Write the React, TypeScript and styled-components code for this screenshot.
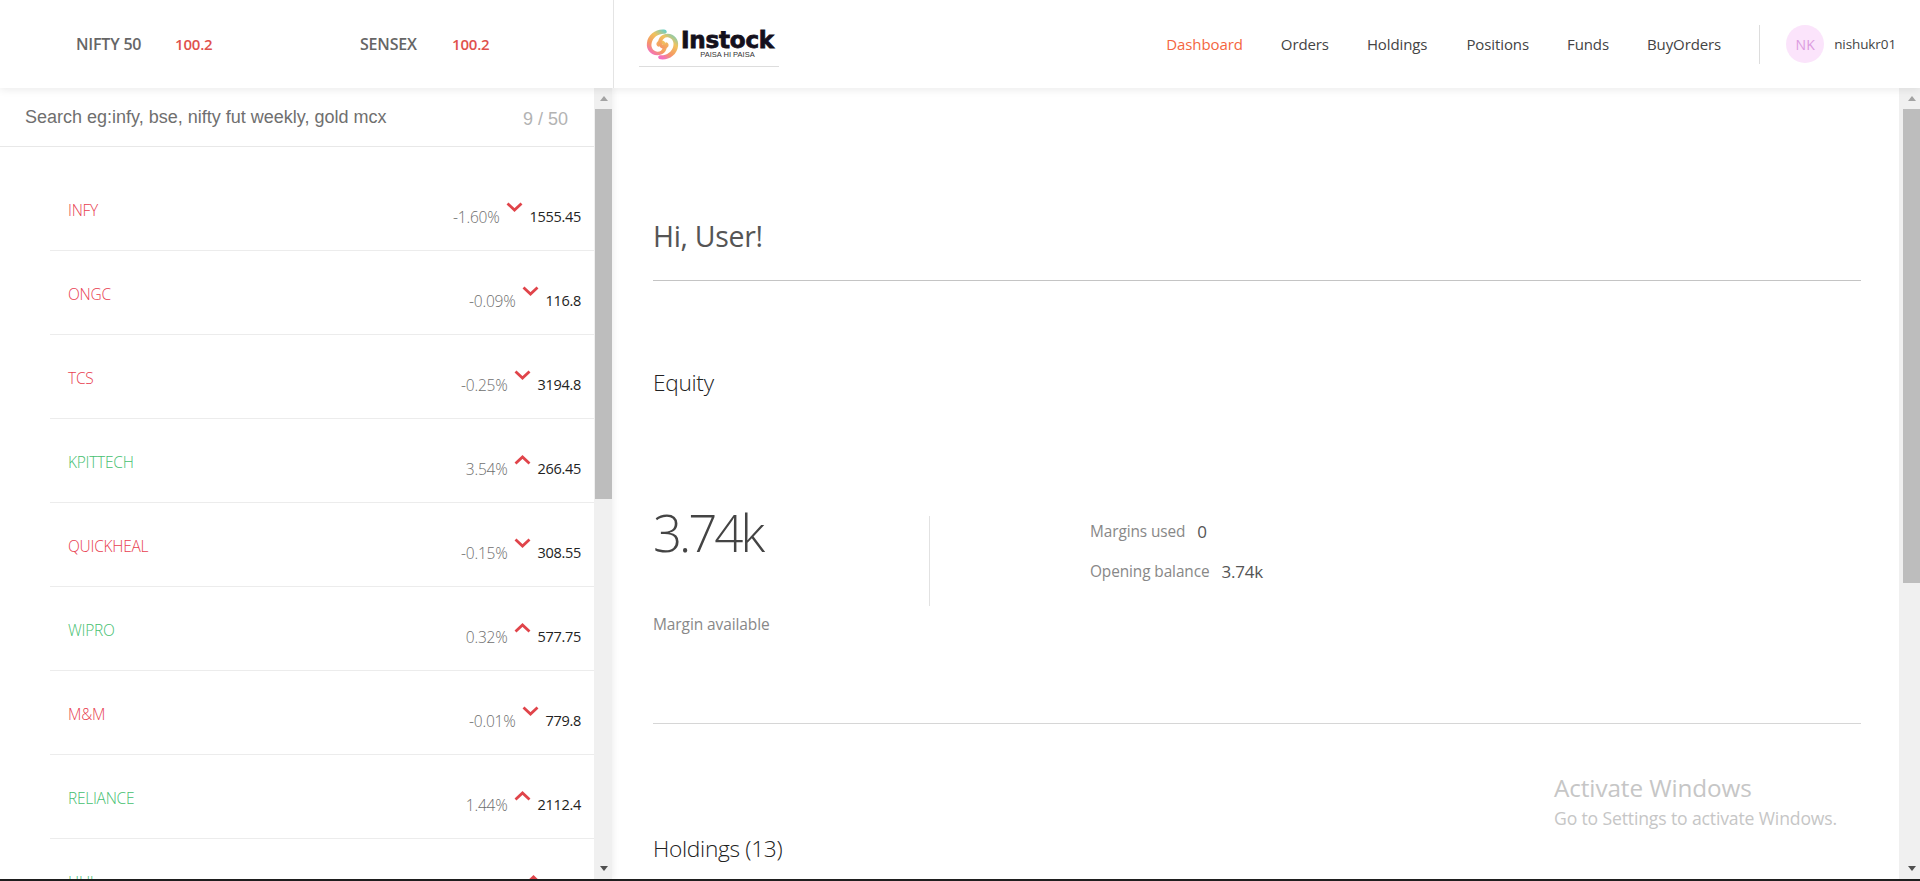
import React from "react";
import styled, { createGlobalStyle } from "styled-components";

const Global = createGlobalStyle`
  html, body { margin: 0; padding: 0; height: 100%; background: #fff; overflow: hidden; }
  * { box-sizing: border-box; }
  body { font-family: "Open Sans", "Noto Sans", sans-serif; }
`;

const Page = styled.div`
  width: 1920px; height: 881px; display: flex; flex-direction: column; overflow: hidden; position: relative;
`;
const TopBar = styled.header`
  height: 88px; flex: none; display: flex; box-shadow: 0 2px 8px rgba(0,0,0,.08); position: relative; z-index: 2; background: #fff;
`;
const Indices = styled.div`
  width: 614px; flex: none; border-right: 1px solid #e4e4e4; display: flex; align-items: center; padding-left: 76px;
`;
const IndexName = styled.span<{ $w: number }>`
  font-size: 16px; font-weight: 600; color: #666; width: ${p => p.$w}px; letter-spacing: -.2px;
`;
const IndexValue = styled.span<{ $w: number }>`
  font-size: 15px; font-weight: 600; color: #df514c; width: ${p => p.$w}px; letter-spacing: -.2px;
`;
const NavSide = styled.div`
  flex: 1; display: flex; align-items: center; padding-left: 25px; padding-right: 24px;
`;
const Logo = styled.div`
  width: 140px; height: 67px; align-self: flex-start; border-bottom: 1px solid #ddd; display: flex; align-items: flex-start; padding: 28px 0 0 7px; gap: 2px;
`;
const LogoWords = styled.div`
  display: flex; flex-direction: column; align-items: center; margin-top: 1px;
`;
const LogoName = styled.span`
  font-family: "DejaVu Sans", sans-serif; font-weight: 700; font-size: 23px; line-height: 22px; color: #14101c; letter-spacing: -.2px; -webkit-text-stroke: .8px #14101c;
`;
const LogoTag = styled.span`
  font-family: "Liberation Sans", sans-serif; font-size: 7.5px; line-height: 8px; color: #333; margin-top: 0;
`;
const Nav = styled.nav`
  margin-left: auto; display: flex; align-items: center;
`;
const NavLink = styled.a<{ $active?: boolean; $gap: number }>`
  font-size: 15px; color: ${p => (p.$active ? "#f4663f" : "#444")}; margin-right: ${p => p.$gap}px; letter-spacing: -.1px;
`;
const NavDivider = styled.div`
  width: 1px; height: 39px; background: #ddd; margin-right: 26px; margin-left: 0;
`;
const Avatar = styled.div`
  width: 38px; height: 38px; border-radius: 50%; background: #fbe4fb; color: #dc9be0; font-size: 14px; display: flex; align-items: center; justify-content: center; margin-right: 10px;
`;
const UserName = styled.span`
  font-size: 13.5px; color: #444; letter-spacing: -.1px;
`;

const Body = styled.div`
  flex: 1; min-height: 0; display: flex;
`;
const Watch = styled.aside`
  width: 612px; flex: none; display: flex; box-shadow: 2px 0 6px rgba(0,0,0,.06); position: relative; z-index: 1;
`;
const WatchMain = styled.div`
  width: 594px; flex: none; overflow: hidden; height: 100%;
`;
const SearchBar = styled.div`
  height: 59px; border-bottom: 1px solid #e8e8e8; display: flex; align-items: center; justify-content: space-between; padding: 0 25px 0 25px; margin-bottom: 20px;
  font-family: "Liberation Sans", sans-serif;
`;
const SearchHint = styled.span`
  font-size: 18px; color: #6f6f6f; margin-top: 1px;
`;
const Count = styled.span`
  font-size: 18px; color: #b3b3b3; margin-top: 4px; margin-right: 1px;
`;
const Row = styled.div`
  height: 84px; margin-left: 50px; border-bottom: 1px solid #ececec; padding: 0 13px 0 18px; display: flex; position: relative;
`;
const Name = styled.span<{ $up: boolean }>`
  font-size: 15.5px; font-weight: 300; color: ${p => (p.$up ? "#45c070" : "#e8404f")}; line-height: 20px; margin-top: 33px; letter-spacing: -.25px;
`;
const Quote = styled.div<{ $reserve?: number }>`
  margin-left: auto; display: flex; align-items: flex-start; padding-right: ${p => p.$reserve ?? 0}px;
`;
const Pct = styled.span`
  font-size: 15.5px; font-weight: 300; color: #6e6e6e; line-height: 20px; margin-top: 40px; letter-spacing: -.2px;
`;
const Chevron = styled.svg`
  width: 17px; height: 11px; margin: 35px 7px 0 6px; display: block; flex: none;
`;
const Price = styled.span`
  font-size: 14.5px; color: #222; line-height: 20px; margin-top: 40px; letter-spacing: -.3px;
`;

const Track = styled.div<{ $w: number }>`
  width: ${p => p.$w}px; flex: none; height: 100%; background: #f0f0f0; display: flex; flex-direction: column; align-items: flex-end;
`;
const ArrowCell = styled.div<{ $down?: boolean }>`
  width: 17px; height: 21px; flex: none; display: flex; align-items: center; justify-content: center; margin-top: ${p => (p.$down ? "auto" : 0)};
  &::before {
    content: ""; width: 0; height: 0; border-left: 4.5px solid transparent; border-right: 4.5px solid transparent;
    ${p => (p.$down ? "border-top: 5px solid #505050;" : "border-bottom: 5px solid #a3a3a3;")}
  }
`;
const Thumb = styled.div<{ $h: number }>`
  width: 17px; height: ${p => p.$h}px; background: #bdbdbd; flex: none;
`;

const Main = styled.main`
  flex: 1; min-width: 0; display: flex;
`;
const Content = styled.div`
  flex: 1; min-width: 0; overflow: hidden; padding: 0 38px 0 41px; height: 100%;
`;
const Greeting = styled.h1`
  margin: 0; padding-top: 128px; height: 193px; border-bottom: 1px solid #c4c4c4; font-size: 28.5px; font-weight: 400; color: #555; line-height: 40px; letter-spacing: -.3px;
`;
const SectionTitle = styled.h2`
  margin: 0; font-size: 22.7px; font-weight: 300; color: #222; line-height: 30px; letter-spacing: -.3px;
`;
const EquityTitle = styled(SectionTitle)`
  margin-top: 87px;
`;
const Equity = styled.section`
  height: 326px; border-bottom: 1px solid #d6d6d6; display: flex; padding-top: 118px;
`;
const Primary = styled.div`
  width: 277px; height: 90px; border-right: 1px solid #e2e2e2; flex: none; position: relative;
`;
const BigValue = styled.div`
  font-size: 51px; font-weight: 300; color: #444; line-height: 56px; margin-top: -12px; letter-spacing: -3px;
`;
const Caption = styled.div`
  font-size: 15.5px; color: #888; line-height: 20px; margin-top: 54px; letter-spacing: -.1px;
`;
const Secondary = styled.div`
  margin-left: 160px; padding-top: 5px; display: flex; flex-direction: column; gap: 20px;
`;
const Stat = styled.div`
  display: flex; align-items: center; height: 20px; gap: 12px;
`;
const StatLabel = styled.span`
  font-size: 15.4px; color: #888; letter-spacing: -.1px;
`;
const StatValue = styled.span`
  font-size: 17px; color: #555; font-weight: 400; letter-spacing: -.2px;
`;
const HoldingsTitle = styled(SectionTitle)`
  margin-top: 110px;
`;
const Watermark = styled.div`
  position: absolute; left: 1554px; top: 773px; color: #c6c6c6; pointer-events: none; font-family: "Open Sans", sans-serif;
`;
const WatermarkTitle = styled.div`
  font-size: 24.3px; line-height: 30px; letter-spacing: -.1px;
`;
const WatermarkText = styled.div`
  font-size: 17.6px; line-height: 24px; margin-top: 3px; letter-spacing: -.15px;
`;
const TaskStrip = styled.div`
  height: 2px; background: #1f1f1f; flex: none;
`;

const rows = [
  { n: "INFY", p: "-1.60%", v: "1555.45", up: false },
  { n: "ONGC", p: "-0.09%", v: "116.8", up: false },
  { n: "TCS", p: "-0.25%", v: "3194.8", up: false },
  { n: "KPITTECH", p: "3.54%", v: "266.45", up: true },
  { n: "QUICKHEAL", p: "-0.15%", v: "308.55", up: false },
  { n: "WIPRO", p: "0.32%", v: "577.75", up: true },
  { n: "M&M", p: "-0.01%", v: "779.8", up: false },
  { n: "RELIANCE", p: "1.44%", v: "2112.4", up: true },
];

const Swirl = () => (
  <svg width="33" height="33" viewBox="0 0 35 33" style={{ flex: "none" }}>
    <defs>
      <linearGradient id="sw" x1="0.9" y1="0" x2="0.3" y2="1">
        <stop offset="0" stopColor="#62cfc9" />
        <stop offset=".35" stopColor="#f0c35e" />
        <stop offset=".7" stopColor="#f59a62" />
        <stop offset="1" stopColor="#f46fc0" />
      </linearGradient>
    </defs>
    <path d="M21 1c-9-2-19 4-20 14-1 7 4 13 11 13 6 0 10-4 10-9 0-4-3-7-6-7-3 0-5 2-5 4 0 1 1 3 3 3 0-2 1-3 2-3 2 0 3 2 2 4-1 3-4 5-7 4-4-1-6-5-5-9 1-6 7-10 13-10 3 0 4-2 2-4z" fill="url(#sw)" />
    <path d="M14 32c9 2 19-4 20-14 1-7-4-13-11-13-6 0-10 4-10 9 0 4 3 7 6 7 3 0 5-2 5-4 0-1-1-3-3-3 0 2-1 3-2 3-2 0-3-2-2-4 1-3 4-5 7-4 4 1 6 5 5 9-1 6-7 10-13 10-3 0-4 2-2 4z" fill="url(#sw)" />
  </svg>
);

const Arrow = ({ up }: { up: boolean }) => (
  <Chevron viewBox="0 0 17 11">
    <path d={up ? "M1.5 9.5 8.5 3l7 6.5" : "M1.5 1.5 8.5 8l7-6.5"} fill="none" stroke="#e0444a" strokeWidth="2.8" />
  </Chevron>
);

const Scrollbar = ({ w, thumb }: { w: number; thumb: number }) => (
  <Track $w={w}>
    <ArrowCell />
    <Thumb $h={thumb} />
    <ArrowCell $down />
  </Track>
);

export default function App() {
  return (
    <Page>
      <Global />
      <TopBar>
        <Indices>
          <IndexName $w={99}>NIFTY 50</IndexName>
          <IndexValue $w={185}>100.2</IndexValue>
          <IndexName $w={92}>SENSEX</IndexName>
          <IndexValue $w={50}>100.2</IndexValue>
        </Indices>
        <NavSide>
          <Logo>
            <Swirl />
            <LogoWords>
              <LogoName>Instock</LogoName>
              <LogoTag>PAISA HI PAISA</LogoTag>
            </LogoWords>
          </Logo>
          <Nav>
            <NavLink $active $gap={38}>Dashboard</NavLink>
            <NavLink $gap={38}>Orders</NavLink>
            <NavLink $gap={39}>Holdings</NavLink>
            <NavLink $gap={38}>Positions</NavLink>
            <NavLink $gap={38}>Funds</NavLink>
            <NavLink $gap={38}>BuyOrders</NavLink>
            <NavDivider />
            <Avatar>NK</Avatar>
            <UserName>nishukr01</UserName>
          </Nav>
        </NavSide>
      </TopBar>
      <Body>
        <Watch>
          <WatchMain>
            <SearchBar>
              <SearchHint>Search eg:infy, bse, nifty fut weekly, gold mcx</SearchHint>
              <Count>9 / 50</Count>
            </SearchBar>
            {rows.map(r => (
              <Row key={r.n}>
                <Name $up={r.up}>{r.n}</Name>
                <Quote>
                  <Pct>{r.p}</Pct>
                  <Arrow up={r.up} />
                  <Price>{r.v}</Price>
                </Quote>
              </Row>
            ))}
            <Row>
              <Name $up>HUL</Name>
              <Quote $reserve={32}>
                <Arrow up />
              </Quote>
            </Row>
          </WatchMain>
          <Scrollbar w={18} thumb={390} />
        </Watch>
        <Main>
          <Content>
            <Greeting>Hi, User!</Greeting>
            <EquityTitle>Equity</EquityTitle>
            <Equity>
              <Primary>
                <BigValue>3.74k</BigValue>
                <Caption>Margin available</Caption>
              </Primary>
              <Secondary>
                <Stat><StatLabel>Margins used</StatLabel><StatValue>0</StatValue></Stat>
                <Stat><StatLabel>Opening balance</StatLabel><StatValue>3.74k</StatValue></Stat>
              </Secondary>
            </Equity>
            <HoldingsTitle>Holdings (13)</HoldingsTitle>
          </Content>
          <Scrollbar w={21} thumb={474} />
        </Main>
      </Body>
      <TaskStrip />
      <Watermark>
        <WatermarkTitle>Activate Windows</WatermarkTitle>
        <WatermarkText>Go to Settings to activate Windows.</WatermarkText>
      </Watermark>
    </Page>
  );
}
